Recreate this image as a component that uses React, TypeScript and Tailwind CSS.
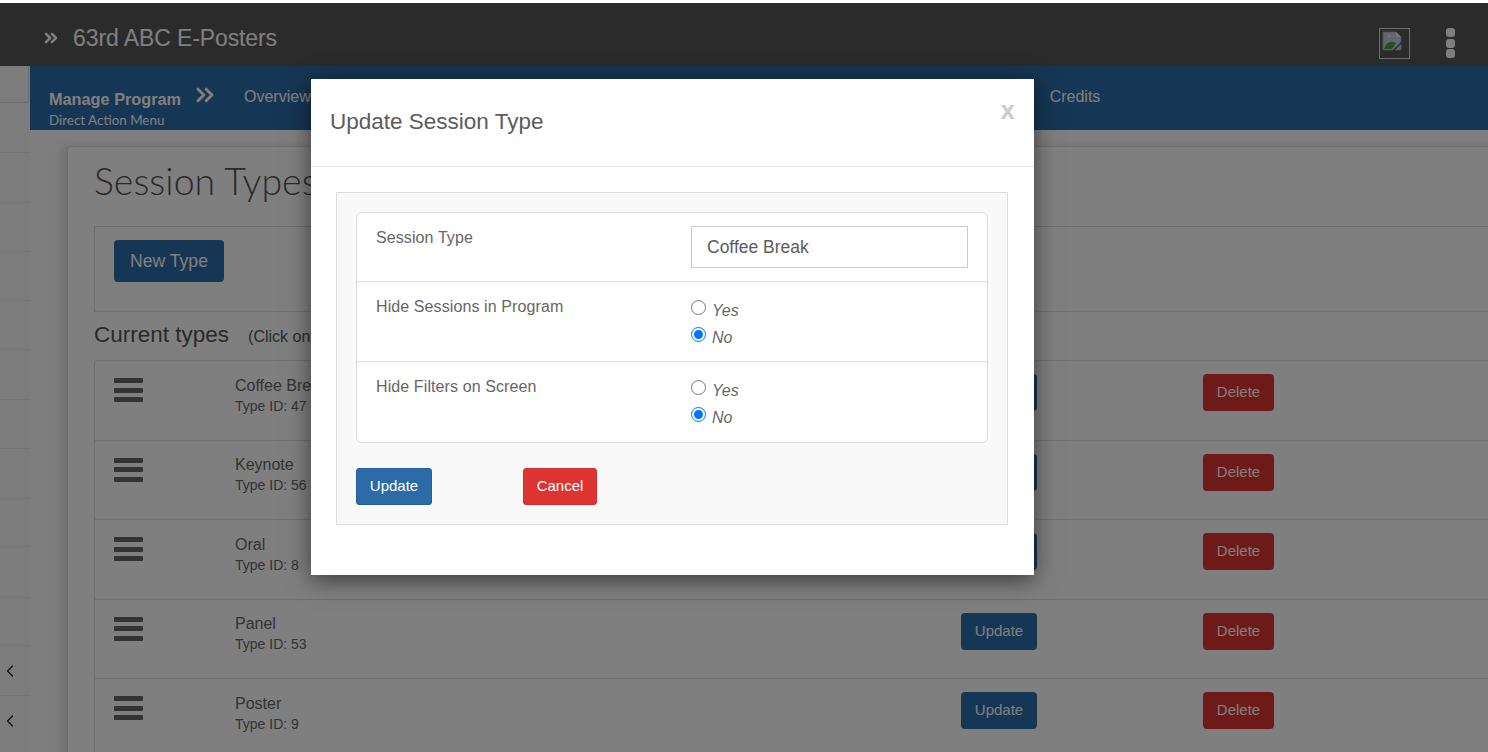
import React from 'react';
import { ChevronsRight, ChevronLeft } from 'lucide-react';

const types = [
  { name: 'Coffee Break', id: 47 },
  { name: 'Keynote', id: 56 },
  { name: 'Oral', id: 8 },
  { name: 'Panel', id: 53 },
  { name: 'Poster', id: 9 },
];

const sideRows = [50, 50, 49, 49, 49, 50, 49, 50, 48, 51, 48, 50, 57];

function BrokenImage() {
  return (
    <svg width="20" height="20" viewBox="0 0 20 20" className="block">
      <path d="M1 1h13l5 5v13H1z" fill="#c3cfdf" stroke="#9aa5b5" strokeWidth="0.8" />
      <path d="M14 1v5h5z" fill="#eee" />
      <path d="M5 6c1-2 4-2 5 0z" fill="#eee" />
      <path d="M2 18c2-7 8-9 12-6l-4 6z" fill="#4a9a3a" />
      <path d="M10 20l10-10v2l-8 8z" fill="#575757" />
    </svg>
  );
}

function YesNo({ group }: { group: string }) {
  return (
    <div className="flex flex-col gap-[8px] pt-[1px] text-[16px] italic text-[#666] leading-[19px]">
      <label className="flex items-start gap-[6px]">
        <input type="radio" name={group} className="w-[15px] h-[15px] -mt-[1px]" />
        <span>Yes</span>
      </label>
      <label className="flex items-start gap-[6px]">
        <input type="radio" name={group} defaultChecked className="w-[15px] h-[15px] -mt-[1px]" />
        <span>No</span>
      </label>
    </div>
  );
}

export default function App() {
  return (
    <div className="relative h-[752px] w-[1488px] overflow-hidden bg-[#fdfdfd] font-['Liberation_Sans',Arial,sans-serif] text-[#666]">
      <div className="h-[3px] bg-white" />

      {/* Top bar */}
      <header className="h-[63px] bg-[#575757] flex items-start pl-[45px] pr-[33px] text-white">
        <ChevronsRight className="w-[20px] h-[20px] -ml-[4px] mt-[25px]" strokeWidth={3} />
        <span className="ml-[12px] mt-[23px] text-[23px] leading-[24px] tracking-[-0.1px]">63rd ABC E-Posters</span>
        <div className="ml-auto flex items-start gap-[36px] pt-[25px]">
          <div className="w-[31px] h-[31px] border border-[#d8d8d8] p-[2px]">
            <BrokenImage />
          </div>
          <div className="flex flex-col gap-[1.5px]">
            <span className="block w-[9px] h-[9px] rounded-[3px] bg-white" />
            <span className="block w-[9px] h-[9px] rounded-[3px] bg-white" />
            <span className="block w-[9px] h-[9px] rounded-[3px] bg-white" />
          </div>
        </div>
      </header>

      <div className="flex">
        {/* Side rail */}
        <aside className="w-[30px] shrink-0 bg-[#f8f8f8]">
          <div className="h-[37px] mr-[1px] border-r border-b border-[#ddd]" />
          {sideRows.map((h, i) => (
            <div
              key={i}
              style={{ height: h }}
              className={`border-b border-[#eaeaea] flex ${i === 12 ? 'items-start pt-[15px]' : 'items-center'} text-[#222]`}
            >
              {i >= 11 && <ChevronLeft className="w-[20px] h-[20px]" strokeWidth={1.5} />}
            </div>
          ))}
        </aside>

        <main className="flex-1 min-w-0">
          {/* Blue action menu */}
          <nav className="h-[64px] bg-[#2b6ca8] flex text-white pl-[19px]">
            <div className="w-[147px] pt-[24px]">
              <div className="font-bold text-[16.3px] leading-[19px]">Manage Program</div>
              <div className="font-['Lato',sans-serif] text-[13.4px] leading-[16px] mt-[3px]">Direct Action Menu</div>
            </div>
            <ChevronsRight className="w-[28px] h-[28px] mt-[15px] -ml-[5px]" strokeWidth={2.5} />
            <span className="ml-[25px] mt-[21px] text-[16px] leading-[20px]">Overview</span>
            <span className="ml-[739px] mt-[21px] text-[16px] leading-[20px]">Credits</span>
          </nav>

          {/* Page card */}
          <div className="pl-[37px] pt-[17px] bg-[#fdfdfd]">
            <section className="w-[1500px] -mt-[1px] border border-[#ddd] rounded-[4px] bg-white pl-[26px] pt-[9px] shadow-[-6px_0_10px_rgba(0,0,0,0.12)]">
              <h1 className="font-['Lato',sans-serif] font-light text-[37.5px] leading-[50px] text-[#555] h-[70px]">Session Types</h1>
              <div className="h-[86px] border border-[#ddd] pl-[19px] pt-[13px]">
                <button className="h-[42px] w-[110px] rounded-[4px] bg-[#2b6ca8] text-white text-[17.6px]">New Type</button>
              </div>
              <div className="flex items-baseline h-[48px] pt-[8px]">
                <span className="text-[22.5px] leading-[30px] text-[#555]">Current types</span>
                <span className="ml-[19px] text-[16px] text-[#555]">(Click on</span>
              </div>
              <div className="border border-[#ddd] rounded-[4px]">
                {types.map((t) => (
                  <div
                    key={t.id}
                    className="h-[79.5px] border-b border-[#ddd] grid grid-cols-[121px_726px_242px_1fr] pl-[19px] pt-[13px]"
                  >
                    <div className="flex flex-col gap-[4.5px] pt-[4px]">
                      <span className="block w-[28.5px] h-[5px] rounded-[1px] bg-[#666]" />
                      <span className="block w-[28.5px] h-[5px] rounded-[1px] bg-[#666]" />
                      <span className="block w-[28.5px] h-[5px] rounded-[1px] bg-[#666]" />
                    </div>
                    <div>
                      <div className="text-[16px] leading-[20px] pt-[1.5px] text-[#666]">{t.name}</div>
                      <div className="text-[14px] leading-[18px] mt-[1px] text-[#666]">Type ID: {t.id}</div>
                    </div>
                    <div>
                      <button className="w-[76px] h-[37px] rounded-[4px] bg-[#2b6ca8] text-white text-[15px]">Update</button>
                    </div>
                    <div>
                      <button className="w-[71px] h-[37px] rounded-[4px] bg-[#dd3431] text-white text-[15px]">Delete</button>
                    </div>
                  </div>
                ))}
              </div>
            </section>
          </div>
        </main>
      </div>

      {/* Backdrop */}
      <div className="absolute inset-x-0 top-[3px] bottom-0 bg-black/50" />

      {/* Modal */}
      <div className="absolute left-[311px] top-[79px] w-[723px] h-[496px] bg-white shadow-[0_5px_22px_rgba(0,0,0,0.55)]">
        <div className="relative h-[88px] border-b border-[#e5e5e5] pl-[19px] pt-[28px]">
          <h2 className="text-[22.5px] leading-[30px] text-[#5c5c5c]">Update Session Type</h2>
          <span className="absolute right-[19px] top-[16px] text-[26px] font-bold leading-[30px] text-[#ccc]">x</span>
        </div>
        <div className="ml-[25px] mr-[26px] mt-[25px] h-[333px] border border-[#ddd] bg-[#f9f9f9] px-[19px] pt-[19px]">
          <div className="border border-[#ddd] rounded-[5px] bg-white">
            <div className="h-[69px] border-b border-[#ddd] grid grid-cols-[315px_1fr] pl-[19px]">
              <div className="pt-[15px] text-[16px] leading-[20px] tracking-[0.1px]">Session Type</div>
              <div className="pt-[13px]">
                <input
                  defaultValue="Coffee Break"
                  className="w-[277px] h-[42px] border border-[#ccc] px-[15px] text-[17.5px] text-[#5c5c5c]"
                />
              </div>
            </div>
            <div className="h-[80px] border-b border-[#ddd] grid grid-cols-[315px_1fr] pl-[19px]">
              <div className="pt-[15px] text-[16px] leading-[20px] tracking-[0.1px]">Hide Sessions in Program</div>
              <div className="pt-[18px]">
                <YesNo group="hide-program" />
              </div>
            </div>
            <div className="h-[80px] grid grid-cols-[315px_1fr] pl-[19px]">
              <div className="pt-[15px] text-[16px] leading-[20px] tracking-[0.1px]">Hide Filters on Screen</div>
              <div className="pt-[18px]">
                <YesNo group="hide-filters" />
              </div>
            </div>
          </div>
          <div className="flex mt-[25px]">
            <button className="w-[76px] h-[37px] rounded-[3px] border border-[#25609a] bg-[#2b6ca8] text-white text-[15px]">Update</button>
            <button className="ml-[91px] w-[74px] h-[37px] rounded-[3px] border border-[#d5302d] bg-[#dd3431] text-white text-[15px]">Cancel</button>
          </div>
        </div>
      </div>
    </div>
  );
}
